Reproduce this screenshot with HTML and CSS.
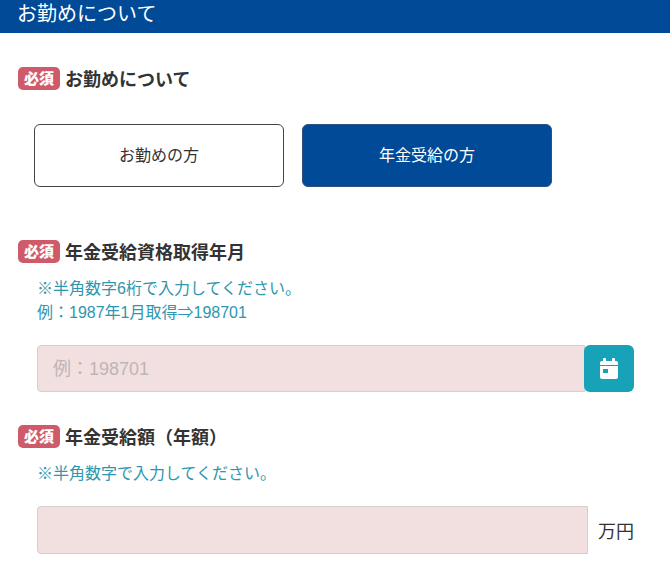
FILE: index.html
```html
<!DOCTYPE html>
<html lang="ja">
<head>
<meta charset="utf-8">
<title>お勤めについて</title>
<link rel="stylesheet" href="styles.css">
</head>
<body>
<header class="bar">お勤めについて</header>
<main class="form">
  <section class="field first">
    <h2 class="label"><span class="badge">必須</span>お勤めについて</h2>
    <div class="choices">
      <div class="choice">お勤めの方</div>
      <div class="choice on">年金受給の方</div>
    </div>
  </section>
  <section class="field second">
    <h2 class="label"><span class="badge">必須</span>年金受給資格取得年月</h2>
    <p class="help">※半角数字6桁で入力してください。<br>例：1987年1月取得⇒198701</p>
    <div class="row date">
      <div class="input ph">例：198701</div>
      <div class="cal">
        <svg width="18" height="21" viewBox="0 0 18 21">
          <path fill="#fff" d="M4 0h1a1 1 0 0 1 1 1v2h6V1a1 1 0 0 1 1-1h1a1 1 0 0 1 1 1v2h1a2 2 0 0 1 2 2v2H0V5a2 2 0 0 1 2-2h1V1a1 1 0 0 1 1-1z"/>
          <path fill="#fff" d="M0 8h18v11a2 2 0 0 1-2 2H2a2 2 0 0 1-2-2z"/>
          <rect x="3" y="11" width="5" height="4" fill="#17a2b8"/>
        </svg>
      </div>
    </div>
  </section>
  <section class="field third">
    <h2 class="label"><span class="badge">必須</span>年金受給額（年額）</h2>
    <p class="help">※半角数字で入力してください。</p>
    <div class="row amount">
      <div class="input tall"></div>
      <span class="unit">万円</span>
    </div>
  </section>
</main>
</body>
</html>
```
FILE: styles.css
```css
* { box-sizing: border-box; }
html, body { margin: 0; padding: 0; }
body {
  width: 670px;
  height: 581px;
  overflow: hidden;
  background: #fff;
  color: #333;
  font-family: "Liberation Sans", "Noto Sans CJK JP", sans-serif;
}
.bar {
  height: 33px;
  padding-left: 17px;
  background: #004a98;
  color: #fff;
  font-size: 20px;
  line-height: 29px;
}
.form { padding: 0 36px 0 18px; }
.first { padding-top: 34px; }
.second { padding-top: 53px; }
.third { padding-top: 33px; }
.label {
  display: flex;
  align-items: flex-start;
  gap: 5px;
  height: 23px;
  margin: 0;
  font-size: 18px;
  line-height: 27px;
  font-weight: 700;
  color: #333;
}
.badge {
  width: 42px;
  height: 23px;
  border-radius: 5px;
  background: #cf5a6a;
  color: #fff;
  font-family: "Noto Sans CJK JP", serif;
  font-size: 15px;
  font-weight: 900;
  line-height: 21px;
  text-align: center;
}
.choices {
  display: flex;
  gap: 18px;
  margin: 34px 0 0 16px;
}
.choice {
  width: 250px;
  height: 63px;
  border: 1px solid #444;
  border-radius: 6px;
  font-size: 16px;
  line-height: 62px;
  text-align: center;
  color: #333;
}
.choice.on {
  background: #004a98;
  border-color: #2f4f7f;
  color: #fff;
}
.help {
  margin: 13px 0 0 19px;
  padding-top: 1px;
  font-size: 16px;
  line-height: 24px;
  color: #2e96ae;
}
.row { display: flex; margin-left: 19px; }
.date { margin-top: 20px; }
.amount { margin-top: 20px; align-items: center; }
.input {
  background: #f2dfe0;
  border: 1px solid #d6cfd0;
  border-radius: 4px 0 0 4px;
}
.ph {
  width: 548px;
  height: 47px;
  padding-left: 15px;
  font-size: 18px;
  line-height: 47px;
  color: #bdb5b6;
}
.cal {
  display: flex;
  align-items: center;
  justify-content: center;
  width: 50px;
  height: 47px;
  margin-left: -1px;
  border-radius: 6px;
  background: #17a2b8;
}
.tall { width: 551px; height: 48px; }
.unit { margin-left: 10px; font-size: 18px; color: #333; }
```
